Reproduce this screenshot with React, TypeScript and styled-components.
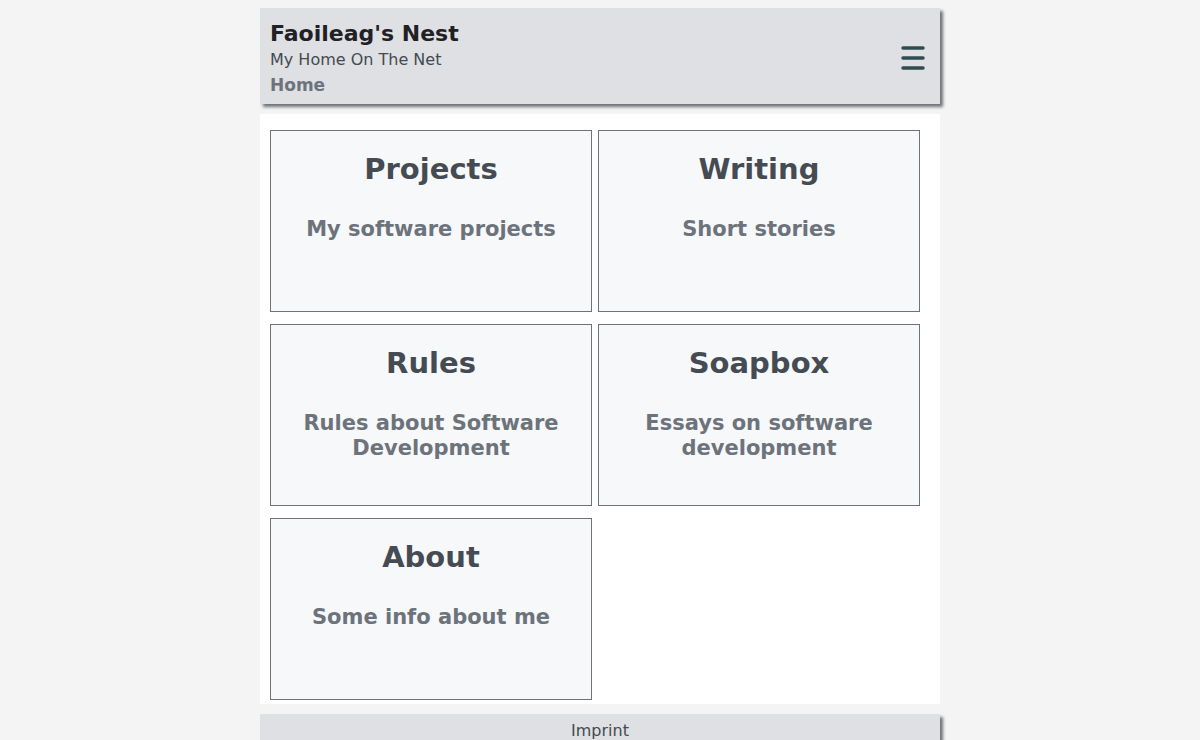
import React from "react";
import styled, { createGlobalStyle } from "styled-components";

const Global = createGlobalStyle`
  html, body { margin: 0; padding: 0; }
  body {
    margin: 8px;
    background: #f4f4f4;
    font-family: "DejaVu Sans", Verdana, sans-serif;
  }
`;

const Page = styled.div`
  width: 680px;
  margin: 0 auto;
  display: flex;
  flex-direction: column;
  gap: 10px;
`;

const Header = styled.header`
  background: #dee0e4;
  box-shadow: 3px 3px 3px #6e737a;
  height: 96px;
  box-sizing: border-box;
  padding: 13px 14px 0 10px;
  display: flex;
  justify-content: space-between;
  align-items: flex-start;
`;

const Brand = styled.div`
  display: flex;
  flex-direction: column;
`;

const Title = styled.div`
  font-size: 22px;
  font-weight: bold;
  color: #1f2124;
  line-height: 26px;
`;

const Tagline = styled.div`
  font-size: 16px;
  color: #454a50;
  line-height: 25px;
`;

const Crumb = styled.div`
  font-size: 17px;
  font-weight: bold;
  color: #6c737b;
  line-height: 26px;
`;

const Burger = styled.button`
  border: none;
  background: none;
  padding: 0;
  margin-top: 24px;
  width: 26px;
  height: 26px;
  display: flex;
  cursor: pointer;
`;

const Main = styled.main`
  background: #ffffff;
  padding: 16px 20px 4px 10px;
  display: grid;
  grid-template-columns: 322px 322px;
  column-gap: 6px;
  row-gap: 12px;
`;

const Card = styled.a`
  height: 182px;
  box-sizing: border-box;
  border: 1px solid #6f7378;
  background: #f7f8fa;
  text-align: center;
  text-decoration: none;
  padding: 20px 10px 0;
`;

const CardTitle = styled.h2`
  margin: 0;
  font-size: 29px;
  font-weight: bold;
  color: #454b52;
  line-height: 36px;
`;

const CardText = styled.p`
  margin: 30px 0 0;
  font-size: 21px;
  font-weight: bold;
  color: #6c737b;
  line-height: 25px;
`;

const Footer = styled.footer`
  background: #dee0e4;
  box-shadow: 3px 3px 3px #6e737a;
  height: 32px;
  text-align: center;
  font-size: 16px;
  color: #454a50;
  padding-top: 7px;
  box-sizing: border-box;
`;

const cards = [
  { title: "Projects", text: "My software projects" },
  { title: "Writing", text: "Short stories" },
  { title: "Rules", text: "Rules about Software Development" },
  { title: "Soapbox", text: "Essays on software development" },
  { title: "About", text: "Some info about me" },
];

export default function App() {
  return (
    <>
      <Global />
      <Page>
        <Header>
          <Brand>
            <Title>Faoileag's Nest</Title>
            <Tagline>My Home On The Net</Tagline>
            <Crumb>Home</Crumb>
          </Brand>
          <Burger aria-label="menu">
            <svg width="26" height="26" viewBox="0 0 26 26">
              <g stroke="#2f4d50" strokeWidth="3.5" strokeLinecap="round">
                <line x1="3" y1="3" x2="23" y2="3" />
                <line x1="3" y1="13" x2="23" y2="13" />
                <line x1="3" y1="23" x2="23" y2="23" />
              </g>
            </svg>
          </Burger>
        </Header>
        <Main>
          {cards.map((c) => (
            <Card key={c.title} href="#">
              <CardTitle>{c.title}</CardTitle>
              <CardText>{c.text}</CardText>
            </Card>
          ))}
        </Main>
        <Footer>Imprint</Footer>
      </Page>
    </>
  );
}
